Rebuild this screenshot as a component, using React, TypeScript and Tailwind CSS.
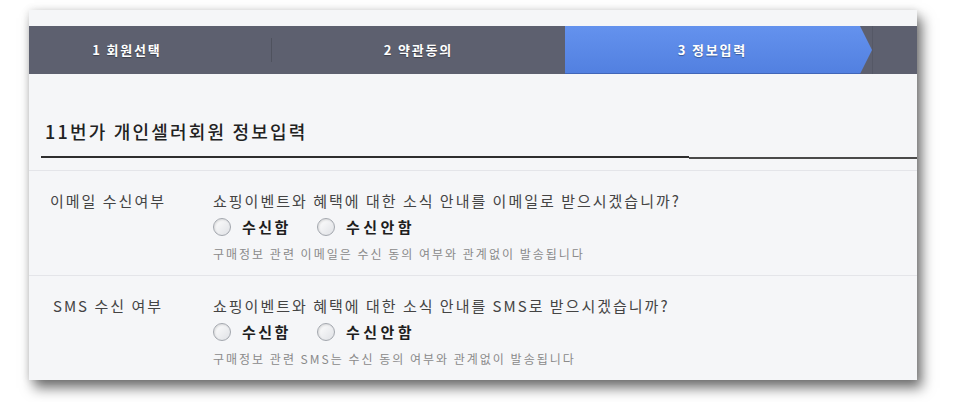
import React from "react";

const font = { fontFamily: '"Noto Sans CJK KR", "Noto Sans", sans-serif' };

function Radio({ label, tracking }: { label: string; tracking: string }) {
  return (
    <label className="flex items-center">
      <span className="block shrink-0 w-[18px] h-[18px] rounded-full border border-[#a3a7ae] bg-gradient-to-br from-[#ffffff] to-[#dfe1e5] shadow-[inset_1px_1px_2px_rgba(0,0,0,0.12)]" />
      <span className={`ml-[11px] text-[15px] leading-[20px] font-bold text-[#1e1e1e] ${tracking}`}>{label}</span>
    </label>
  );
}

function Row({ label, question, note }: { label: string; question: string; note: string }) {
  return (
    <div className="flex h-[110px] border-t border-[#e4e5e9] pt-[20px]">
      <div className="w-[158px] text-center text-[15px] leading-[20px] text-[#444] tracking-[2px]">{label}</div>
      <div className="ml-[26px] flex flex-col">
        <div className="text-[15px] leading-[20px] text-[#444] tracking-[2px]">{question}</div>
        <div className="mt-[6px] flex items-center h-[20px]">
          <Radio label="수신함" tracking="tracking-[2.5px]" />
          <div className="w-[26px]" />
          <Radio label="수신안함" tracking="tracking-[3.5px]" />
        </div>
        <div className="mt-[9px] text-[12px] leading-[16px] text-[#8a8a8a] tracking-[2px]">{note}</div>
      </div>
    </div>
  );
}

export default function App() {
  return (
    <div className="min-h-screen bg-white pt-[10px] pl-[29px]" style={font}>
      <div className="w-[888px] h-[370px] bg-[#f5f6f8] overflow-hidden flex flex-col shadow-[5px_8px_12px_rgba(0,0,0,0.55),0_0_8px_rgba(0,0,0,0.12)]">
        <div className="h-[16px] shrink-0" />
        <div className="h-[48px] shrink-0 flex bg-[#5d606f] text-white text-[13px] font-bold tracking-[1.8px] [text-shadow:0_1px_1px_rgba(0,0,0,0.35)]">
          <div className="w-[242px] flex items-center justify-center pr-[46px]">1 회원선택</div>
          <div className="w-px h-[24px] self-center bg-[#4f525e]" />
          <div className="w-[293px] flex items-center justify-center">2 약관동의</div>
          <div className="w-[307px] flex items-center justify-center pr-[12px] bg-gradient-to-b from-[#6492ee] to-[#5280e0] border-b border-[#4166b8] [clip-path:polygon(0_0,calc(100%-12px)_0,100%_50%,calc(100%-12px)_100%,0_100%)]">
            3 정보입력
          </div>
          <div className="w-px bg-[#555866]" />
        </div>
        <div className="h-[82px] shrink-0 flex items-end pb-[13px] pl-[16px]">
          <div className="text-[18px] leading-[24px] text-[#222] tracking-[2.2px] font-medium">11번가 개인셀러회원 정보입력</div>
        </div>
        <div className="flex shrink-0 h-[3px]">
          <div className="ml-[12px] w-[648px] h-[2px] bg-[#2e2e2e]" />
          <div className="flex-1 h-[2px] mt-[1px] bg-[#4a4a4a]" />
        </div>
        <div className="h-[11px] shrink-0" />
        <Row
          label="이메일 수신여부"
          question="쇼핑이벤트와 혜택에 대한 소식 안내를 이메일로 받으시겠습니까?"
          note="구매정보 관련 이메일은 수신 동의 여부와 관계없이 발송됩니다"
        />
        <Row
          label="SMS 수신 여부"
          question="쇼핑이벤트와 혜택에 대한 소식 안내를 SMS로 받으시겠습니까?"
          note="구매정보 관련 SMS는 수신 동의 여부와 관계없이 발송됩니다"
        />
      </div>
    </div>
  );
}
